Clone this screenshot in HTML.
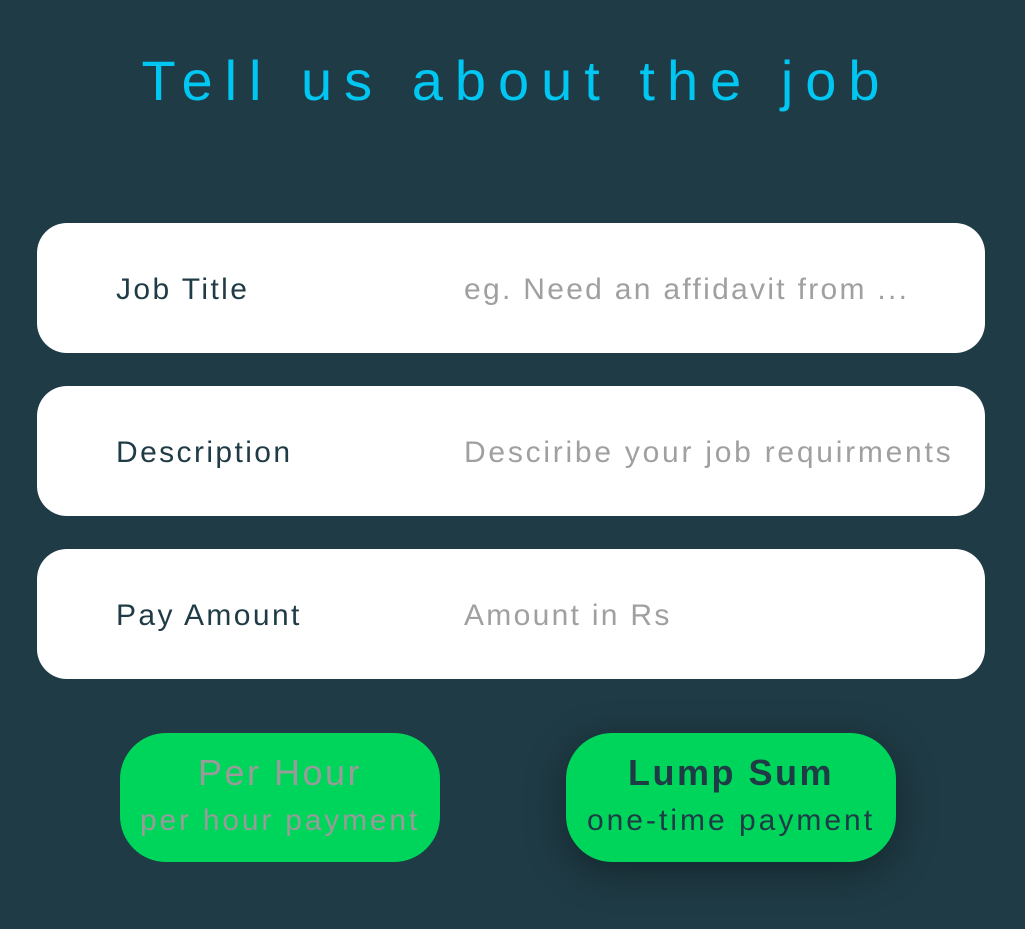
<!DOCTYPE html>
<html><head><style>
body{margin:0;width:1025px;height:929px;background:#1f3b45;font-family:"Liberation Sans",sans-serif;position:relative;overflow:hidden}
h1{position:absolute;top:48px;left:4px;width:1025px;text-align:center;margin:0;font-weight:normal;font-size:56px;letter-spacing:12px;color:#00c6f2;line-height:66px}
.card{position:absolute;left:37px;width:948px;height:130px;background:#fff;border-radius:30px}
.lab{position:absolute;left:79px;top:50px;font-size:30px;color:#1f3b45;letter-spacing:2.4px}
.ph{position:absolute;left:427px;top:50px;font-size:30px;color:#a0a0a0;white-space:nowrap;letter-spacing:2.3px}
.btn{position:absolute;top:733px;height:129px;background:#00d55b;border-radius:46px;text-align:center}
.t1{font-size:36px;margin-top:20px;line-height:40px;letter-spacing:2.5px}
.t2{font-size:30px;line-height:40px;margin-top:8px;letter-spacing:2.8px}
</style></head><body>
<h1>Tell us about the job</h1>
<div class="card" style="top:223px"><div class="lab">Job Title</div><div class="ph">eg. Need an affidavit from ...</div></div>
<div class="card" style="top:386px"><div class="lab">Description</div><div class="ph" style="letter-spacing:2.75px">Desciribe your job requirments</div></div>
<div class="card" style="top:549px"><div class="lab">Pay Amount</div><div class="ph">Amount in Rs</div></div>
<div class="btn" style="left:120px;width:320px;color:#9a9a9a"><div class="t1">Per Hour</div><div class="t2">per hour payment</div></div>
<div class="btn" style="left:566px;width:330px;color:#1f3b45;box-shadow:0 10px 40px rgba(0,0,0,0.35)"><div class="t1" style="font-weight:bold">Lump Sum</div><div class="t2" style="letter-spacing:3px">one-time payment</div></div>
</body></html>
